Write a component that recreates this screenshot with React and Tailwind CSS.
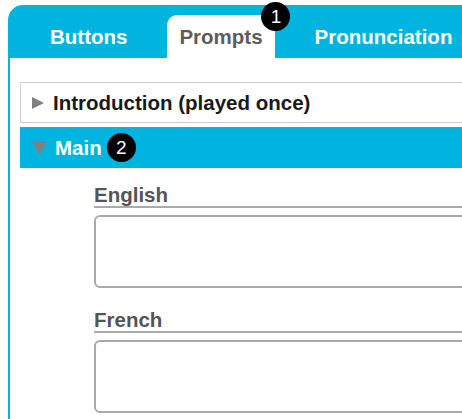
import React from "react";

const font = { fontFamily: '"Liberation Sans", Arial, sans-serif' };

function Badge({ n, className = "" }) {
  return (
    <span
      className={`flex h-[29px] w-[29px] items-center justify-center rounded-full bg-black text-[19px] font-normal leading-none text-white ${className}`}
    >
      {n}
    </span>
  );
}

function Tab({ label, active, badge }) {
  return (
    <div
      className={`relative flex h-[43px] items-center px-[12px] text-[20.5px] font-bold leading-[23px] ${
        active ? "rounded-t-[10px] bg-white text-[#5c5c5c]" : "text-white"
      }`}
    >
      {label}
      {badge && <Badge n={badge} className="absolute -top-[13px] left-[94px]" />}
    </div>
  );
}

function Field({ label, first }) {
  return (
    <div className={first ? "mt-[15px]" : "mt-[20px]"}>
      <div className="h-[25px] border-b-2 border-[#aaaaaa] text-[20.5px] font-bold leading-[23px] text-[#555555]">
        {label}
      </div>
      <div className="mt-[7px] h-[73px] rounded-[6px] border-2 border-[#aaaaaa] bg-white" />
    </div>
  );
}

export default function App() {
  return (
    <div className="h-[419px] w-[462px] overflow-hidden bg-white" style={font}>
      <div className="pl-[8px] pt-[5px]">
        <div className="w-[540px] rounded-tl-[15px] bg-[#00b4e0]">
          {/* tabs */}
          <div className="flex h-[53px] items-end gap-[28px] pl-[30px]">
            <Tab label="Buttons" />
            <Tab label="Prompts" active badge="1" />
            <Tab label="Pronunciation" />
          </div>

          {/* content */}
          <div className="h-[400px] border-l-2 border-[#00b4e0] bg-white pl-[10px] pt-[24px]">
            <div className="flex h-[41px] items-center border border-[#cfcfcf] pl-[11px] text-[20.5px] font-bold leading-[23px] text-[#1a1a1a]">
              <svg width="12" height="12" viewBox="0 0 12 12" className="mr-[9px]">
                <polygon points="0,0 12,6 0,12" fill="#808080" />
              </svg>
              Introduction (played once)
            </div>

            <div className="mt-[4px] flex h-[41px] items-center bg-[#00b4e0] pl-[12px] text-[20.5px] font-bold leading-[23px] text-white">
              <svg width="15" height="14" viewBox="0 0 15 14" className="mr-[8px]">
                <polygon points="0,0 15,0 7.5,14" fill="#808080" />
              </svg>
              Main
              <Badge n="2" className="ml-[5px]" />
            </div>

            <div className="ml-[74px]">
              <Field label="English" first />
              <Field label="French" />
            </div>
          </div>
        </div>
      </div>
    </div>
  );
}
